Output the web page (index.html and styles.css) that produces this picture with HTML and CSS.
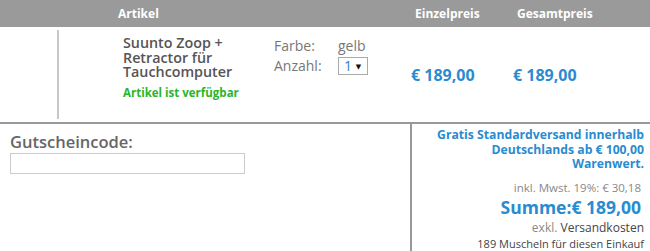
FILE: index.html
```html
<!DOCTYPE html>
<html lang="de">
<head>
  <meta charset="UTF-8" />
  <title>Warenkorb</title>
  <link rel="stylesheet" href="styles.css">
</head>
<body>
  <div class="cart">
    <div class="cart-head">
      <div class="c-img"></div>
      <div class="c-name">Artikel</div>
      <div class="c-attr"></div>
      <div class="c-single">Einzelpreis</div>
      <div class="c-total">Gesamtpreis</div>
    </div>

    <div class="cart-row">
      <div class="c-img"><div class="img-line"></div></div>
      <div class="c-name">
        <div class="prod-title">Suunto Zoop + Retractor für Tauchcomputer</div>
        <div class="prod-stock">Artikel ist verfügbar</div>
      </div>
      <div class="c-attr">
        <div class="attrs">
          <span>Farbe:</span><span>gelb</span>
          <span>Anzahl:</span>
          <span><span class="qty">1 <span class="arrow">▼</span></span></span>
        </div>
      </div>
      <div class="c-single price">€ 189,00</div>
      <div class="c-total price">€ 189,00</div>
    </div>
  </div>

  <div class="summary">
    <div class="voucher">
      <label for="code">Gutscheincode:</label>
      <input type="text" id="code" />
    </div>
    <div class="totals">
      <p class="shipping">Gratis Standardversand innerhalb Deutschlands ab € 100,00 Warenwert.</p>
      <p class="tax">inkl. Mwst. 19%: € 30,18</p>
      <p class="sum">Summe:€ 189,00</p>
      <p class="excl">exkl. <span>Versandkosten</span></p>
      <p class="points">189 Muscheln für diesen Einkauf</p>
    </div>
  </div>
</body>
</html>
```

FILE: styles.css
```css
body {
  margin: 0;
  font-family: "Open Sans", "DejaVu Sans", sans-serif;
  color: #666;
  background: #fff;
}
.cart-head,
.cart-row {
  display: grid;
  grid-template-columns: 58px 208px 136px 103px 145px;
}
.cart-head {
  background-color: #9a9a9a;
  color: #fff;
  font-size: 12px;
  font-weight: bold;
  height: 27px;
  align-items: center;
}
.cart-head .c-name { padding-left: 60px; }
.cart-head .c-single { padding-left: 13px; }
.cart-head .c-total { padding-left: 12px; }

.cart-row {
  height: 95px;
  border-bottom: 2px solid #999;
}
.cart-row .c-img {
  padding: 3px 0;
}
.img-line {
  width: 2px;
  height: 100%;
  margin-left: 57px;
  background-color: #c8c8c8;
}
.cart-row .c-name {
  padding: 9px 8px 0 65px;
}
.prod-title {
  font-size: 14.3px;
  font-weight: 600;
  line-height: 14.5px;
  color: #555;
}
.prod-stock {
  margin-top: 6px;
  font-size: 11.5px;
  font-weight: bold;
  color: #2bb52b;
  line-height: 14px;
}
.cart-row .c-attr {
  padding: 10px 0 0 8px;
}
.attrs {
  display: grid;
  grid-template-columns: 64px auto;
  row-gap: 2px;
  font-size: 14px;
  line-height: 18px;
  color: #777;
}
.qty {
  display: inline-block;
  border: 1px solid #aaa;
  padding: 0 6px 0 5px;
  color: #2a84c6;
  font-size: 14px;
  line-height: 15px;
}
.arrow {
  font-size: 7px;
  color: #111;
  vertical-align: 2px;
}
.price {
  padding-top: 37px;
  font-size: 16px;
  font-weight: bold;
  color: #2a8bd0;
}
.cart-row .c-single { padding-left: 9px; }
.cart-row .c-total { padding-left: 8px; }

.summary {
  display: grid;
  grid-template-columns: 410px 240px;
  height: 128px;
}
.voucher {
  padding: 7px 10px;
}
.voucher label {
  display: block;
  font-size: 16.5px;
  font-weight: 600;
  color: #666;
  line-height: 22px;
}
.voucher input {
  display: block;
  width: 235px;
  height: 21px;
  box-sizing: border-box;
  border: 1px solid #ccc;
  padding: 0;
  margin-top: 0;
}
.totals {
  border-left: 2px solid #999;
  text-align: right;
  padding: 4px 6px 0 10px;
}
.totals p {
  margin: 0;
  line-height: normal;
}
.shipping {
  font-size: 12.2px;
  font-weight: bold;
  color: #2a8bd0;
  padding-left: 6px;
}
.totals .shipping {
  line-height: 14.5px;
}
.tax {
  margin-top: 8px !important;
  font-size: 11.5px;
  color: #888;
  padding-right: 3px;
}
.sum {
  font-size: 17.5px;
  font-weight: bold;
  color: #2a8bd0;
  padding-right: 3px;
}
.excl {
  font-size: 12px;
  color: #888;
}
.excl span {
  color: #444;
}
.points {
  font-size: 11px;
  color: #444;
}
```
